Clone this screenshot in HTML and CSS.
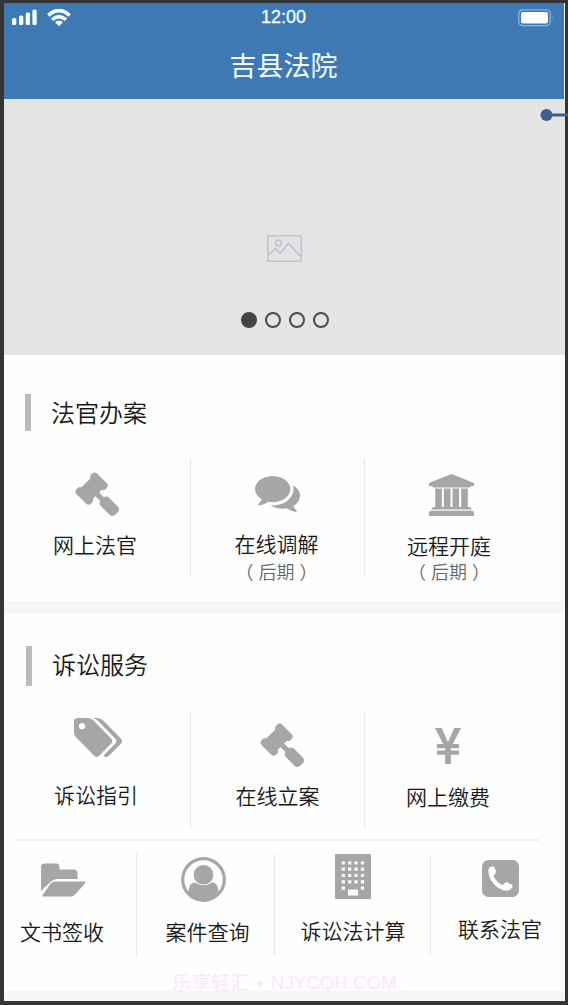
FILE: index.html
```html
<!DOCTYPE html>
<html lang="zh-CN">
<head>
<meta charset="utf-8">
<title>吉县法院</title>
<link rel="stylesheet" href="styles.css">
</head>
<body>
<svg class="defs" width="0" height="0">
  <symbol id="gavel" viewBox="-19 -19 1830 1830" preserveAspectRatio="none"><path stroke="#a6a6a6" stroke-width="80" stroke-linejoin="round" d="M1771 1536q0 53-37 90l-107 108q-39 37-91 37-53 0-90-37l-363-364q-38-36-38-90 0-53 43-96l-256-256-126 126q-14 14-34 14t-34-14q2 2 12.500 12t12.500 13 10 11.500 10 13.500 6 13.500 5.500 16.500 1.500 18q0 38-28 68-3 3-16.500 18t-19 20.500-18.500 16.500-22 15.500-22 9-26 4.500q-40 0-68-28l-408-408q-28-28-28-68 0-13 4.500-26t9-22 15.500-22 16.500-18.500 20.500-19 18-16.500q30-28 68-28 10 0 18 1.500t16.500 5.500 13.500 6 13.500 10 11.500 10 13 12.500 12 12.500q-14-14-14-34t14-34l348-348q14-14 34-14t34 14q-2-2-12.500-12t-12.500-13-10-11.500-10-13.500-6-13.500-5.500-16.500-1.500-18q0-38 28-68 3-3 16.500-18t19-20.500 18.500-16.500 22-15.500 22-9 26-4.500q40 0 68 28l408 408q28 28 28 68 0 13-4.500 26t-9 22-15.500 22-16.500 18.500-20.500 19-18 16.500q-30 28-68 28-10 0-18-1.500t-16.500-5.500-13.500-6-13.500-10-11.500-10-13-12.500-12-12.500q14 14 14 34t-14 34l-126 126 256 256q43-43 96-43 52 0 91 37l363 363q37 39 37 91z"/></symbol>
</svg>
<div class="phone">
  <header class="header">
    <div class="status">
      <div class="signals">
        <svg width="25" height="16" viewBox="0 0 25 16"><rect x="0" y="9" width="4.300" height="7" rx="1.500"/><rect x="7" y="6.500" width="4.300" height="9.500" rx="1.500"/><rect x="13.700" y="3.500" width="4.300" height="12.500" rx="1.500"/><rect x="20.400" y="0.500" width="4.300" height="15.500" rx="1.500"/></svg>
        <svg width="24" height="18" viewBox="0 0 24 18"><g fill="none" stroke="#f4fdff" stroke-width="3.600"><path d="M1.300 6.300Q12-3.300 22.700 6.300"/><path d="M5 10.700Q12 4.600 19 10.700"/></g><path d="M8 13.300Q12 9.800 16 13.300L12 17.300z"/></svg>
      </div>
      <div class="time">12:00</div>
      <svg class="battery" width="37" height="18" viewBox="0 0 37 18"><rect x="0.800" y="0.800" width="31.500" height="15.800" rx="4" fill="none" stroke="#8fb2d8" stroke-width="1.300"/><rect x="3" y="3" width="27" height="11.400" rx="2" fill="#fff"/><path d="M35 6.500q1.500 2 0 4.500z" fill="#8fb2d8"/></svg>
    </div>
    <h1 class="title">吉县法院</h1>
  </header>

  <section class="banner">
    <svg class="placeholder" width="35" height="27" viewBox="0 0 35 27" fill="none" stroke="#b9bcc2" stroke-width="1.200"><rect x="0.800" y="0.800" width="33.400" height="25.400" fill="#e2e3e6"/><circle cx="11.500" cy="8" r="2.800"/><path d="M1 20.500L8.500 13.500L13 18.500L21.500 8.500L34 21.500"/></svg>
    <div class="dots"><i class="dot active"></i><i class="dot"></i><i class="dot"></i><i class="dot"></i></div>
  </section>

  <section class="section judge">
    <h2 class="heading"><span>法官办案</span></h2>
    <div class="row">
      <div class="cell c1"><svg class="icon gavel" width="44" height="44"><use href="#gavel"/></svg><span class="label">网上法官</span></div>
      <div class="cell c2 mediate">
        <svg class="icon" width="45" height="36" viewBox="0 256 1792 1408" preserveAspectRatio="none"><path d="M1408 768q0 139-94 257t-256.500 186.500-353.500 68.500q-86 0-176-16-124 88-278 128-36 9-86 16h-3q-11 0-20.500-8t-11.500-21q-1-3-1-6.500t.5-6.500 2-6l2.500-5 3.500-5.500 4-5 4.500-5 4-4.500q5-6 23-25t26-29.500 22.500-29 25-38.500 20.500-44q-124-72-195-177t-71-224q0-139 94-257t256.500-186.500 353.500-68.500 353.500 68.500 256.500 186.500 94 257zm384 256q0 120-71 224.500t-195 176.500q10 24 20.500 44t25 38.500 22.500 29 26 29.500 23 25q1 1 4 4.500t4.500 5 4 5 3.500 5.500l2.500 5 2 6 .5 6.500-1 6.500q-3 14-13 22t-22 7q-50-7-86-16-154-40-278-128-90 16-176 16-271 0-472-132 58 4 88 4 161 0 309-45t264-129q125-92 192-212t67-254q0-77-23-152 129 71 204 178t75 230z"/></svg>
        <span class="label">在线调解</span><span class="later"><b>（</b>后期<b>）</b></span>
      </div>
      <div class="cell c3 court">
        <svg class="icon" width="45" height="42" viewBox="0 0 45 42"><path d="M22.500 0L45 9v3h-3q-.5 1.500-2 1.500H5Q3.500 13.500 3 12H0V9zM6.200 14.500h6.600v18.500H6.200zM14.900 14.500h6.600v18.500h-6.600zM23.500 14.500h6.600v18.500h-6.600zM32.200 14.500h6.600v18.500h-6.600zM4.500 33h36q2 0 2 2.500h-40q0-2.500 2-2.500zM2 36.800h41q2 0 2 2.500V42H0v-2.700Q0 36.800 2 36.800z"/></svg>
        <span class="label">远程开庭</span><span class="later"><b>（</b>后期<b>）</b></span>
      </div>
    </div>
  </section>

  <section class="section service">
    <h2 class="heading"><span>诉讼服务</span></h2>
    <div class="row">
      <div class="cell c1 guide">
        <svg class="icon" width="48" height="39" viewBox="128 128 1899 1515" preserveAspectRatio="none"><path d="M576 448q0-53-37.500-90.500t-90.500-37.500-90.500 37.500-37.500 90.500 37.500 90.500 90.500 37.500 90.500-37.500 37.500-90.500zm1067 576q0 53-37 90l-491 492q-39 37-91 37-53 0-90-37l-715-716q-38-37-64.500-101t-26.500-117v-416q0-52 38-90t90-38h416q53 0 117 26.500t102 64.500l715 714q37 39 37 91zm384 0q0 53-37 90l-491 492q-39 37-91 37-36 0-59-14t-53-45l470-470q37-37 37-90 0-52-37-91l-715-714q-38-38-102-64.500t-117-26.500h224q53 0 117 26.500t102 64.500l715 714q37 39 37 91z"/></svg>
        <span class="label">诉讼指引</span>
      </div>
      <div class="cell c2 filing"><svg class="icon gavel" width="44" height="44"><use href="#gavel"/></svg><span class="label">在线立案</span></div>
      <div class="cell c3 pay">
        <svg class="icon" width="26" height="36" viewBox="0 0 27 36" preserveAspectRatio="none"><path d="M0 0h7l6.500 14L20 0H27l-8.500 16H25v4.200h-8.500v2.300H25v4.200h-8.500V36h-6v-9.300H2v-4.200h8.500V20.200H2V16h6.500z"/></svg>
        <span class="label">网上缴费</span>
      </div>
    </div>
    <div class="row small">
      <div class="cell s1">
        <svg class="icon" width="45" height="34" viewBox="0 0 45 34"><path d="M0 28V4Q0 .5 3.500 .5H15q3.500 0 3.500 3.500v2.500H33q3.500 0 3.500 3.500v6H16q-3.500 0-6 2.500zM13.500 18.500H44q1 .5 .3 1.500L34.500 31q-2 2.500-5 2.500H2q-1-.5-.3-1.500L10 20q1.500-1.500 3.500-1.500z"/></svg>
        <span class="label">文书签收</span>
      </div>
      <div class="cell s2">
        <svg class="icon" width="45" height="45" viewBox="0 0 45 45"><circle cx="22.500" cy="22.500" r="20.800" fill="none" stroke="#a6a6a6" stroke-width="3.200"/><circle cx="22.500" cy="17.700" r="9.800"/><path d="M7.500 36Q7.500 25 14 25.500q8.500 5.500 17 0Q37.500 25 37.500 36L32 41Q22.500 45 13 41z"/></svg>
        <span class="label">案件查询</span>
      </div>
      <div class="cell s3">
        <svg class="icon" width="36" height="45" viewBox="0 0 36 45"><rect width="36" height="45" rx="1"/><g stroke="#fff" stroke-width="3.200" stroke-dasharray="3.200 3.200"><path d="M6.700 9h23M6.700 15.200h23M6.700 21.500h23M6.700 27.800h23"/></g><path fill="#fff" d="M6.700 32.500h3.200v3.200H6.700zM25.900 32.500h3.200v3.200h-3.200zM13 35.500h10v6H13z"/></svg>
        <span class="label">诉讼法计算</span>
      </div>
      <div class="cell s4">
        <svg class="icon" width="37" height="37" viewBox="0 0 37 37"><rect width="37" height="37" rx="6.500"/><path fill="#fff" d="M6.500 9Q7.500 6.500 11 6.300q1 0 1.500 1.500l1.700 4q.3 1.200-2.400 3.400-.6 1 .4 2.500 3 4.800 7.500 7 1.300.5 2.300-.7 1.600-2.400 2.700-2l5.300 2.800q.9.600.2 2.500-1.200 3.500-6 3.500Q18 30 12 24.200 5.500 17 6.500 9z"/></svg>
        <span class="label">联系法官</span>
      </div>
    </div>
  </section>
  <div class="watermark">乐享轻汇<span>•</span><em>NJYCQH.COM</em></div>
</div>
<svg class="callout" width="28" height="14" viewBox="0 0 28 14"><path d="M7 7h21" stroke="#3b628d" stroke-width="3"/><circle cx="6.500" cy="7" r="6" fill="#3b628d"/></svg>
</body>
</html>
```
FILE: styles.css
```css
* { box-sizing: border-box; }
body {
  margin: 0;
  position: relative;
  width: 568px;
  height: 1005px;
  padding: 3px 3px 4px 4px;
  overflow: hidden;
  background: #353535;
  color: #181818;
  font-family: "Liberation Sans", "Noto Sans CJK SC", sans-serif;
}
.defs { position: absolute; }
.phone {
  position: relative;
  height: 998px;
  background: #f6f6f6;
}
.header {
  height: 96px;
  margin-right: 1px;
  background: #3f79b4;
  color: #f4fdff;
}
.status {
  display: grid;
  grid-template-columns: 1fr 60px 1fr;
  height: 30px;
  padding: 5px 9px 0 8px;
}
.signals { display: flex; gap: 10px; fill: #f4fdff; padding-top: 1px; }
.time {
  font-size: 18px;
  line-height: 19px;
  text-align: center;
  -webkit-text-stroke: 0.3px #f4fdff;
}
.battery { justify-self: end; margin-top: 1px; }
.title {
  margin: 12px 1px 0 0;
  font: 400 27px/40px "Noto Sans CJK SC", sans-serif;
  text-align: center;
}
.banner {
  display: flex;
  flex-direction: column;
  align-items: center;
  height: 256px;
  padding-top: 136px;
  background: #e4e4e4;
}
.dots { display: flex; gap: 8px; margin-top: 50px; }
.dot {
  width: 16px;
  height: 16px;
  border: 2.500px solid #4a4a4a;
  border-radius: 50%;
}
.dot.active { background: #444; border-color: #444; }
.section { background: #fefefe; }
.judge { height: 246px; padding-top: 39px; margin-bottom: 12px; }
.service { height: 378px; padding-top: 33px; }
.heading {
  display: flex;
  height: 37px;
  margin: 0 0 27px 21px;
  padding-left: 20px;
  border-left: 6px solid #bbb;
  font: 350 24px/35px "Noto Sans CJK SC", sans-serif;
}
.service .heading { height: 40px; margin: 0 0 25px 22px; line-height: 36px; }
.row { display: flex; height: 118px; }
.cell {
  display: flex;
  flex-direction: column;
  align-items: center;
  border-right: 1px solid #e7e7e7;
}
.cell:last-child { border-right: 0; }
.icon { fill: #a6a6a6; flex: none; }
.label {
  font: 350 21px/24px "Noto Sans CJK SC", sans-serif;
  white-space: nowrap;
}
.later {
  margin-top: 4px;
  color: #666;
  font: 350 18px/24px "Noto Sans CJK SC", sans-serif;
}
.later b { font-weight: 350; }
.later b:first-child { margin-right: 5px; }
.later b:last-child { margin-left: 5px; }
.c1 { width: 187px; padding: 14px 4px 0 0; }
.c1 .gavel { margin-left: 3px; }
.c1 .label { margin-top: 16px; }
.c2 { width: 174px; padding: 18px 2px 0 0; }
.mediate .icon { margin-left: 2px; }
.c2 .label { margin-top: 19px; }
.c3 { width: 200px; padding: 16px 32px 0 0; }
.court .icon { margin-left: 5px; }
.c3 .label { margin-top: 17px; }
.court .later { margin-top: 2px; }
.guide { padding: 7px 2px 0 0; }
.guide .icon { margin-left: 4px; }
.guide .label { margin-top: 25px; }
.filing { padding: 12px 0 0; }
.filing .icon { margin-left: 9px; }
.filing .label { margin-top: 16px; }
.pay { padding: 17px 34px 0 0; }
.pay .label { margin-top: 20px; }
.small {
  height: 117px;
  width: 523px;
  margin: 10px 0 0 12px;
  padding: 13px 0 0;
  border-top: 2px solid #f0f0f0;
}
.small .cell { height: 102px; }
.s1 { width: 121px; padding: 9px 28px 0 0; }
.s1 .icon { margin-left: 3px; }
.s1 .label { margin-top: 22px; }
.s2 { width: 138px; padding: 3px 0 0 4px; }
.s2 .icon { margin-right: 9px; }
.s2 .label { margin-top: 17px; }
.s3 { width: 156px; padding: 0 0 0 1px; }
.s3 .label { margin-top: 19px; }
.s4 { width: 108px; flex: none; padding: 6px 0 0 30px; }
.s4 .label { margin-top: 19px; }
/* Overlays */
.watermark {
  position: absolute;
  left: 168px;
  top: 968px;
  display: flex;
  align-items: center;
  color: #fce6fc;
  font-size: 19.500px;
  line-height: 24px;
}
.watermark span { width: 21px; text-align: center; }
.watermark em { font-style: normal; font-size: 18.700px; }
.callout { position: absolute; left: 540px; top: 108px; }
```
